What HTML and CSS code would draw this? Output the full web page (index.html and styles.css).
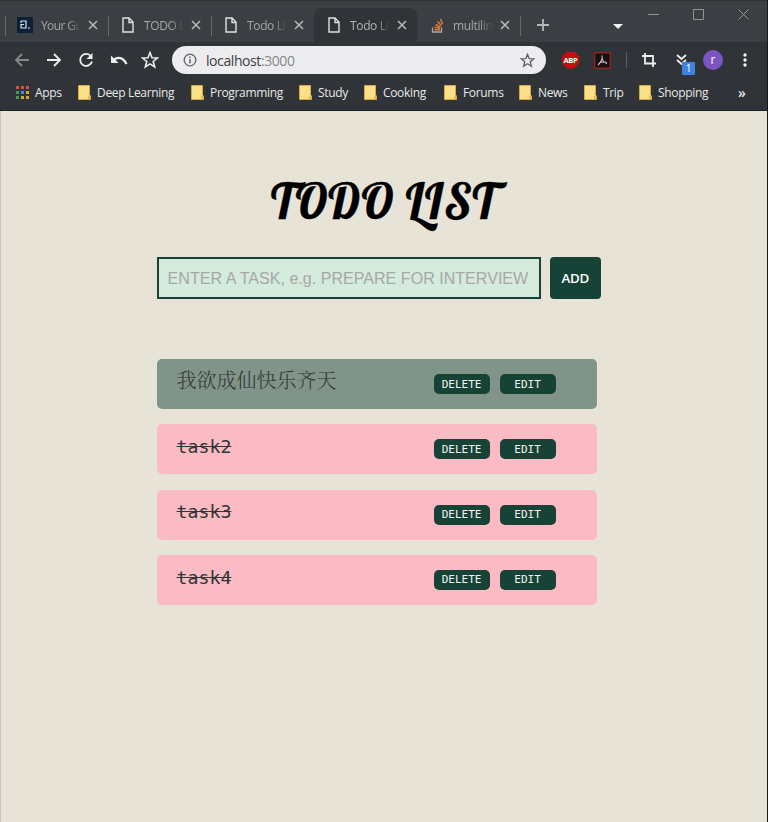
FILE: index.html
```
<!DOCTYPE html>
<html lang="en">
<head>
<meta charset="utf-8">
<title>Todo List</title>
<link rel="stylesheet" href="styles.css">
</head>
<body>
<svg class="defs" width="0" height="0">
  <symbol id="doc" viewBox="0 0 12 16"><path d="M1 1h6l4 4v10H1zM7 1v4.500h4" fill="none" stroke="currentColor" stroke-width="1.400"/></symbol>
  <symbol id="x" viewBox="0 0 10 10"><path d="M1 1l8 8M9 1l-8 8" stroke="currentColor" stroke-width="1.500"/></symbol>
  <symbol id="star" viewBox="0 0 18 18"><path d="M9 1.500l2 5.200 5.500.3-4.300 3.500 1.500 5.500L9 12.900 4.300 16l1.500-5.500L1.500 7 7 6.700z" fill="none" stroke="currentColor" stroke-width="1.600"/></symbol>
  <symbol id="folder" viewBox="0 0 13 15"><path d="M.5.5h11v9.500l1 1v3.500H.5z" fill="#fbe08a" stroke="#d9a93f"/><path d="M10 13.500v-3l2 1.500v2z" fill="#e0b24a"/></symbol>
</svg>
<div class="window">
  <header class="browser">
    <div class="strip">
      <div class="tab first"><svg class="fav" viewBox="0 0 16 16"><path d="M0 0h16v16H0z" fill="#0c2138"/><path d="M4 4h5v7H4V7.500h3M4 4v2M11 11h2" fill="none" stroke="#dce3e8" stroke-width="1.200"/></svg><span class="name">Your Gu</span><svg class="close"><use href="#x"/></svg></div>
      <div class="tab"><svg class="doc"><use href="#doc"/></svg><span class="name">TODO L</span><svg class="close"><use href="#x"/></svg></div>
      <div class="tab"><svg class="doc"><use href="#doc"/></svg><span class="name">Todo Li</span><svg class="close"><use href="#x"/></svg></div>
      <div class="tab active"><svg class="doc"><use href="#doc"/></svg><span class="name">Todo Li</span><svg class="close"><use href="#x"/></svg></div>
      <div class="tab plain"><svg class="so" viewBox="0 0 13 15"><path d="M1.500 9.500V14h9V9.500" fill="none" stroke="#a8a8a8" stroke-width="1.300"/><path d="M3.500 11.800h5.500M3.500 9.300l5.500 1M4.500 6.500l5 2.500M6.500 3.500l4 4M9.500 1l2 5" stroke="#dd7c30" stroke-width="1.500"/></svg><span class="name">multilin</span><svg class="close"><use href="#x"/></svg></div>
      <div class="tab new"><svg width="12" height="12" viewBox="0 0 12 12"><path d="M6 0v12M0 6h12" stroke="#b5b7b9" stroke-width="1.800"/></svg></div>
      <svg class="caret" viewBox="0 0 10 5"><path d="M0 0h10L5 5z" fill="#f2f2f2"/></svg>
      <div class="controls">
        <svg width="11" height="11" viewBox="0 0 11 11"><path d="M0 5.500h11"/></svg>
        <svg width="11" height="11" viewBox="0 0 11 11"><path d="M.5.5h10v10H.5z"/></svg>
        <svg width="11" height="11" viewBox="0 0 11 11"><path d="M.5.5l10 10M10.500.5l-10 10"/></svg>
      </div>
    </div>
    <div class="toolbar">
      <svg class="ic dim" viewBox="0 0 16 16"><path d="M15 8H2M8 2L2 8l6 6"/></svg>
      <svg class="ic" viewBox="0 0 16 16"><path d="M1 8h13M8 2l6 6-6 6"/></svg>
      <svg class="ic" viewBox="0 0 16 16"><path d="M13 4.300A6 6 0 1 0 14 9.500"/><path d="M14.500 1v6h-6z" class="solid"/></svg>
      <svg class="ic wide" viewBox="0 0 18 16"><path d="M3.500 8C8 4.500 13 5 16.500 12" stroke-width="2.300"/><path d="M1 3.500V11h7.500z" class="solid"/></svg>
      <svg class="ic wide last"><use href="#star"/></svg>
      <div class="address">
        <svg class="info" viewBox="0 0 14 14"><circle cx="7" cy="7" r="5.800" fill="none" stroke="#5f6368" stroke-width="1.300"/><path d="M7 6v4.300M7 3.500v1.500" stroke="#5f6368" stroke-width="1.500"/></svg>
        <span class="url">localhost<span class="port">:3000</span></span>
        <svg class="fave" viewBox="0 0 18 18"><use href="#star"/></svg>
      </div>
      <div class="abp">ABP</div>
      <svg class="pdf" viewBox="0 0 17 17"><path d="M.7.7h15.600v15.600H.7z" fill="#171112" stroke="#96201d" stroke-width="1.400"/><path d="M8 3.500C8.500 7 8 9 4 13M8 6c.5 3 2 4.500 5 5.500M5.500 10.800c2-.8 4-1 7-.6" fill="none" stroke="#d8c9c8" stroke-width="1.100"/></svg>
      <div class="rule"></div>
      <svg class="crop" viewBox="0 0 14 14"><path d="M3 0v10.500h11M0 3h11v11" fill="none" stroke="#eee" stroke-width="1.800"/></svg>
      <div class="down"><svg width="11" height="12" viewBox="0 0 11 12"><path d="M1 1l4.500 4L10 1M1 6l4.500 4L10 6" fill="none" stroke="#eee" stroke-width="1.800"/></svg><span class="count">1</span></div>
      <div class="avatar">r</div>
      <svg class="dots" viewBox="0 0 4 14"><g fill="#f1f1f1"><circle cx="2" cy="2" r="1.700"/><circle cx="2" cy="7" r="1.700"/><circle cx="2" cy="12" r="1.700"/></g></svg>
    </div>
    <nav class="bookmarks">
      <svg class="apps" viewBox="0 0 13 13"><path d="M0 0h3v3H0zM5 0h3v3H5zM10 0h3v3h-3z" fill="#df4d43"/><path d="M0 5h3v3H0zM0 10h3v3H0z" fill="#3b9a63"/><path d="M5 5h3v3H5z" fill="#4285e8"/><path d="M10 5h3v3h-3zM5 10h3v3H5zM10 10h3v3h-3z" fill="#d5a431"/></svg>
      <span class="bm apps-name">Apps</span>
      <svg class="folder"><use href="#folder"/></svg><span class="bm deep">Deep Learning</span>
      <svg class="folder"><use href="#folder"/></svg><span class="bm prog">Programming</span>
      <svg class="folder"><use href="#folder"/></svg><span class="bm study">Study</span>
      <svg class="folder"><use href="#folder"/></svg><span class="bm cook">Cooking</span>
      <svg class="folder"><use href="#folder"/></svg><span class="bm forum">Forums</span>
      <svg class="folder"><use href="#folder"/></svg><span class="bm news">News</span>
      <svg class="folder"><use href="#folder"/></svg><span class="bm trip">Trip</span>
      <svg class="folder"><use href="#folder"/></svg><span class="bm shop">Shopping</span>
      <span class="more">»</span>
    </nav>
  </header>
  <main>
    <h1>TODO LIST</h1>
    <form class="entry">
      <input type="text" placeholder="ENTER A TASK, e.g. PREPARE FOR INTERVIEW">
      <button type="button" class="add">ADD</button>
    </form>
    <ul class="tasks">
      <li class="open"><span class="task">我欲成仙快乐齐天</span><button>DELETE</button><button>EDIT</button></li>
      <li><span class="task">task2</span><button>DELETE</button><button>EDIT</button></li>
      <li><span class="task">task3</span><button>DELETE</button><button>EDIT</button></li>
      <li><span class="task">task4</span><button>DELETE</button><button>EDIT</button></li>
    </ul>
  </main>
</div>
</body>
</html>
```
FILE: styles.css
```
* { box-sizing: border-box; }
body { margin: 0; background: #17191b; font-family: "Open Sans", "Noto Sans", sans-serif; overflow: hidden; }
svg { display: block; flex: none; }
.defs { position: absolute; }
.window { width: 767px; height: 822px; background: #e8e3d7; border-left: 1px solid #c9c4bb; }
.browser { height: 111px; margin-left: -1px; background: #303337; border-bottom: 1px solid #1f2225; }

.strip { display: flex; height: 42px; padding: 7px 0 0 5px; background: #3b3e42; border-top: 1px solid #2e3134; }
.tab { display: flex; align-items: center; width: 103px; height: 34px; padding: 0 10px 0 14px; color: #a5a7a9; font-size: 12px; position: relative; }
.tab::before { content: ""; position: absolute; left: 0; top: 8px; width: 1px; height: 20px; background: #69696a; }
.tab.active::before, .tab.plain::before { display: none; }
.tab.active { background: #303337; border-radius: 8px 8px 0 0; color: #b3b5b6; }
.tab.first { padding-left: 12px; }
.tab .name { width: 41px; margin-left: auto; overflow: hidden; white-space: nowrap; letter-spacing: -.35px; -webkit-mask-image: linear-gradient(90deg, #000 65%, transparent 98%); mask-image: linear-gradient(90deg, #000 65%, transparent 98%); }
.tab.first .name { letter-spacing: -.6px; }
.tab .close { width: 10px; height: 10px; margin-left: 6px; color: #b9bbbc; }
.doc { width: 12px; height: 16px; color: #e2e2e2; }
.fav { width: 16px; height: 16px; }
.so { width: 13px; height: 15px; }
.tab.new { width: 38px; padding: 0 0 0 17px; }
.caret { width: 10px; height: 5px; margin: 16px 0 0 55px; }
.controls { display: flex; gap: 34px; margin: 1px 0 0 25px; }
.controls path { fill: none; stroke: #929495; stroke-width: 1; }

.toolbar { display: flex; align-items: center; height: 36px; padding-left: 14px; color: #eee; }
.ic { width: 16px; height: 16px; margin-right: 16px; fill: none; stroke: currentColor; stroke-width: 1.800; }
.ic .solid { fill: currentColor; stroke: none; }
.ic.dim { color: #85878a; }
.ic.wide { width: 18px; margin-right: 13px; }
.ic.wide.last { height: 18px; }
.address { display: flex; align-items: center; width: 374px; height: 28px; padding: 0 11px; border-radius: 14px; background: #ededef; }
.info { width: 14px; height: 14px; }
.url { margin-left: 9px; color: #3c3d40; font-size: 14px; letter-spacing: -.42px; }
.port { color: #84888a; }
.fave { width: 15px; height: 15px; margin-left: auto; color: #5f6368; }
.abp { width: 17px; height: 17px; margin-left: 16px; background: #c70d0e; color: #fff; font-size: 7.500px; font-weight: 700; line-height: 17px; text-align: center; letter-spacing: -.3px; clip-path: polygon(30% 0, 70% 0, 100% 30%, 100% 70%, 70% 100%, 30% 100%, 0 70%, 0 30%); }
.pdf { width: 17px; height: 17px; margin-left: 15px; }
.rule { width: 1px; height: 16px; margin-left: 15px; background: #5b5d60; }
.crop { width: 14px; height: 14px; margin-left: 15px; }
.down { position: relative; width: 22px; height: 12px; margin-left: 20px; }
.count { position: absolute; left: 6px; top: 8px; width: 13px; height: 13px; border-radius: 1px; background: #4381df; color: #fff; font-size: 10px; line-height: 13px; text-align: center; }
.avatar { width: 20px; height: 20px; margin-left: 5px; border-radius: 50%; background: #7d55c3; color: #fff; font-size: 12px; line-height: 19px; text-align: center; }
.dots { width: 4px; height: 14px; margin-left: 20px; }

.bookmarks { display: flex; align-items: center; height: 28px; padding-left: 16px; color: #e8e8e9; font-size: 12px; white-space: nowrap; }
.apps { width: 13px; height: 13px; margin-right: 6px; }
.folder { width: 13px; height: 15px; margin: 0 6px 0 0; }
.bm { letter-spacing: -.33px; }
.apps-name { width: 43px; }
.deep { width: 94px; }
.prog { width: 89px; }
.study { width: 46px; }
.cook { width: 61px; }
.forum { width: 56px; }
.news { width: 46px; }
.trip { width: 36px; }
.shop { width: 80px; }
.more { font-size: 14px; font-weight: 600; }

main { margin-left: 155.600px; padding-top: 58px; }
h1 { width: 245px; height: 64px; margin: 0 0 24px 114.500px; color: #000; font: 400 48px/64px "Lobster", "Liberation Serif", serif; letter-spacing: 1.100px; white-space: nowrap; -webkit-text-stroke: .3px #000; }
.entry { display: flex; gap: 9.500px; height: 42px; margin: 0; }
.entry input { width: 384px; height: 42px; padding: 0 9px; border: 2px solid #174236; outline: 0; background: #d4ebdd; font: 16.080px "Liberation Sans", sans-serif; border-radius: 0; }
.entry input::placeholder { color: #a6a8a5; opacity: 1; }
button { padding: 0; border: 0; background: #174236; color: #eee; }
.add { width: 50.500px; height: 42px; border-radius: 4px; font: 600 13.330px "Open Sans", sans-serif; letter-spacing: -.3px; color: #fff; }
.tasks { display: flex; flex-direction: column; gap: 15.300px; width: 440px; margin: 60px 0 0; padding: 0; list-style: none; }
.tasks li { display: flex; gap: 10px; height: 50px; padding: 15px 0 0 20px; border-radius: 5px; background: #fabbc5; }
.tasks .open { background: #81948a; }
.task { width: 247px; margin-top: -7.400px; color: #303634; font: 18.200px/30px "DejaVu Sans Mono", monospace; text-decoration: line-through; }
.open .task { font: 20px/26px "Noto Serif CJK SC", "Noto Sans CJK SC", serif; font-weight: 300; text-decoration: none; }
.tasks button { width: 56px; height: 20px; border-radius: 5px; font: 11px "DejaVu Sans Mono", monospace; color: #f4f4f4; }
```
